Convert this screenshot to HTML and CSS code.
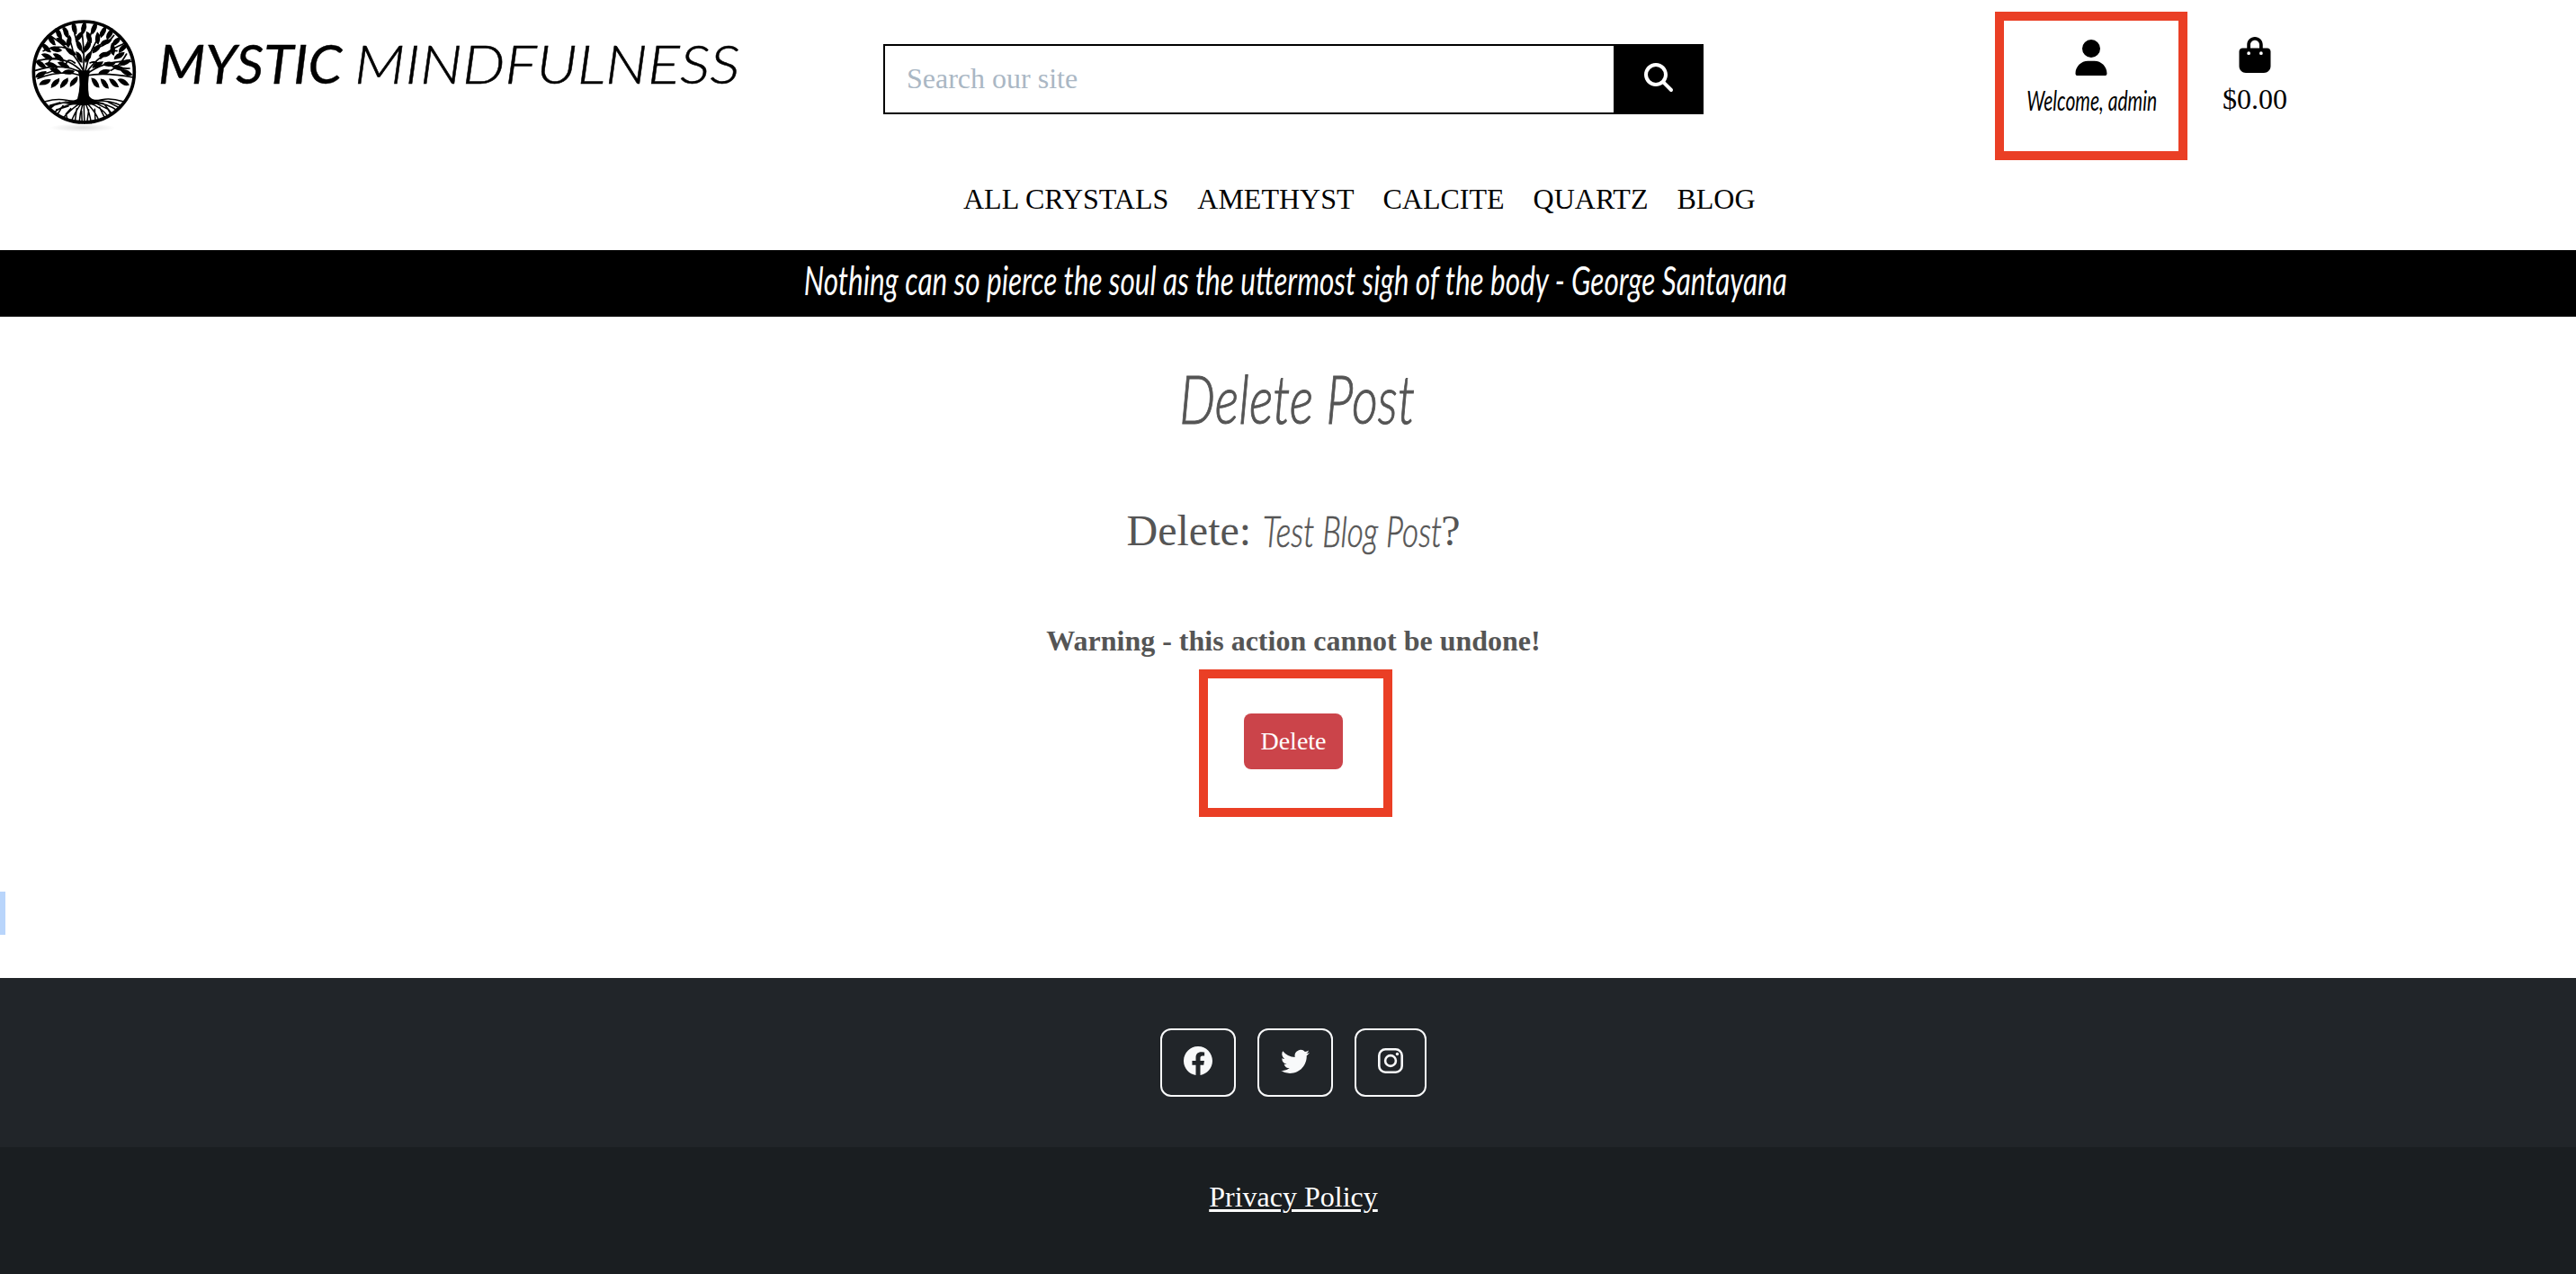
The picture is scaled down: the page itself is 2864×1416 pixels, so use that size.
FILE: index.html
```html
<!DOCTYPE html>
<html lang="en">
<head>
<meta charset="utf-8">
<title>Mystic Mindfulness - Delete Post</title>
<link rel="stylesheet" href="styles.css">
</head>
<body>
<header class="top">
  <a class="brand">
    <svg class="tree" viewBox="0 0 450 420">
      <defs>
        <path id="leaf" d="M-22 0Q-8-18 22 0Q6 17-22 0Z"/>
        <radialGradient id="shade"><stop offset="0" stop-color="#ddd"/><stop offset="1" stop-color="#fff"/></radialGradient>
      </defs>
      <ellipse cx="215" cy="396" rx="110" ry="14" fill="url(#shade)"/>
      <circle cx="220" cy="210" r="168" fill="#fff" stroke="#000" stroke-width="11"/>
      <path d="M200 205Q212 250 198 300Q180 310 150 316L220 322L290 314Q246 305 237 290Q230 250 240 205Z"/>
      <g class="branches">
        <path d="M218 215Q222 150 216 100T222 48M218 205Q190 150 150 120T112 92M214 210Q160 150 66 172M216 215Q150 175 58 205M210 222Q150 200 66 232M224 210Q240 130 285 70M226 215Q270 150 355 115M228 218Q290 170 378 175M228 222Q290 210 384 228M185 155Q180 100 150 66M160 130Q120 120 84 140M219 150Q190 110 186 62M219 140Q240 100 252 55M250 130Q290 130 320 88M275 165Q310 135 330 140M150 175Q110 150 100 185M290 180Q330 200 372 198M130 195Q110 215 84 214M310 205Q340 190 362 150M190 180Q165 160 160 185M240 180Q260 170 276 190"/>
      </g>
      <g class="roots">
        <path d="M92 308Q130 298 160 304T204 304M350 308Q310 296 280 302T236 300M190 310Q140 306 100 330M196 314Q150 320 118 346M204 316Q170 340 148 366M210 316Q186 350 178 376M216 316Q206 350 204 380M220 316Q220 350 222 382M226 316Q240 350 244 380M232 316Q260 346 270 372M240 314Q280 330 300 358M246 310Q300 316 330 338M250 306Q310 304 344 322M160 310L122 320L104 334M150 322L130 354M176 332L160 350L166 372M196 332L190 376M212 340L214 380M236 336L230 380M256 334L258 376M272 328L290 364M290 320L314 350M300 310L340 330M168 324L128 336M140 312L106 322M264 316L300 334L310 352"/>
      </g>
      <g>
        <use href="#leaf" transform="translate(220 62) rotate(-85)"/><use href="#leaf" transform="translate(188 64) rotate(-110)"/><use href="#leaf" transform="translate(254 64) rotate(-75)"/><use href="#leaf" transform="translate(284 76) rotate(-70)"/><use href="#leaf" transform="translate(160 78) rotate(-115)"/><use href="#leaf" transform="translate(136 82) rotate(-120)"/><use href="#leaf" transform="translate(306 84) rotate(-65)"/><use href="#leaf" transform="translate(328 108) rotate(-50)"/><use href="#leaf" transform="translate(112 104) rotate(-130)"/>
        <use href="#leaf" transform="translate(146 108) rotate(-150)"/><use href="#leaf" transform="translate(204 92) rotate(-60)"/><use href="#leaf" transform="translate(237 94) rotate(-115)"/><use href="#leaf" transform="translate(266 98) rotate(-95)"/><use href="#leaf" transform="translate(294 110) rotate(-25)"/><use href="#leaf" transform="translate(170 108) rotate(-85)"/><use href="#leaf" transform="translate(94 130) rotate(-140)"/><use href="#leaf" transform="translate(126 134) rotate(-170)"/><use href="#leaf" transform="translate(350 130) rotate(-50)"/><use href="#leaf" transform="translate(316 134) rotate(-100)"/>
        <use href="#leaf" transform="translate(204 122) rotate(-120)"/><use href="#leaf" transform="translate(232 126) rotate(-65)"/><use href="#leaf" transform="translate(262 132) rotate(-50)"/><use href="#leaf" transform="translate(176 142) rotate(-150)"/><use href="#leaf" transform="translate(98 158) rotate(-160)"/><use href="#leaf" transform="translate(135 160) rotate(-150)"/><use href="#leaf" transform="translate(204 160) rotate(-120)"/><use href="#leaf" transform="translate(234 160) rotate(-65)"/><use href="#leaf" transform="translate(290 152) rotate(-15)"/><use href="#leaf" transform="translate(338 156) rotate(-35)"/>
        <use href="#leaf" transform="translate(76 184) rotate(-150)"/><use href="#leaf" transform="translate(110 186) rotate(-170)"/><use href="#leaf" transform="translate(152 186) rotate(-160)"/><use href="#leaf" transform="translate(266 186) rotate(-30)"/><use href="#leaf" transform="translate(304 184) rotate(-10)"/><use href="#leaf" transform="translate(358 178) rotate(-30)"/><use href="#leaf" transform="translate(334 196) rotate(10)"/><use href="#leaf" transform="translate(76 218) rotate(150)"/><use href="#leaf" transform="translate(126 206) rotate(20)"/><use href="#leaf" transform="translate(168 210) rotate(170)"/>
        <use href="#leaf" transform="translate(288 210) rotate(-20)"/><use href="#leaf" transform="translate(362 212) rotate(20)"/><use href="#leaf" transform="translate(90 244) rotate(155)"/><use href="#leaf" transform="translate(124 247) rotate(130)"/><use href="#leaf" transform="translate(154 247) rotate(125)"/><use href="#leaf" transform="translate(186 242) rotate(125)"/><use href="#leaf" transform="translate(258 246) rotate(50)"/><use href="#leaf" transform="translate(289 249) rotate(50)"/><use href="#leaf" transform="translate(320 247) rotate(40)"/><use href="#leaf" transform="translate(352 244) rotate(25)"/>
      </g>
    </svg>
    <span class="script brand-bold">MYSTIC</span>
    <span class="script brand-thin">MINDFULNESS</span>
  </a>
  <form class="search">
    <input class="search-input" type="text" placeholder="Search our site">
    <button class="search-button" type="button"><svg width="32" height="32" viewBox="0 0 512 512" fill="#fff"><path d="M416 208c0 45.9-14.9 88.3-40 122.700L502.600 457.400c12.500 12.500 12.500 32.800 0 45.300s-32.800 12.500-45.300 0L330.700 376c-34.400 25.200-76.800 40-122.700 40C93.100 416 0 322.900 0 208S93.100 0 208 0S416 93.100 416 208zM208 352a144 144 0 1 0 0-288 144 144 0 1 0 0 288z"/></svg></button>
  </form>
  <div class="account">
    <svg width="36" height="40" viewBox="0 0 448 512"><path d="M224 256A128 128 0 1 0 224 0a128 128 0 1 0 0 256zm-45.700 48C79.800 304 0 383.800 0 482.300C0 498.700 13.300 512 29.700 512H418.300c16.400 0 29.700-13.300 29.700-29.700C448 383.800 368.200 304 269.700 304H178.300z"/></svg>
    <span class="script welcome">Welcome, admin</span>
    <div class="mark mark-account"></div>
  </div>
  <div class="bag">
    <svg width="36" height="40" viewBox="0 0 448 512"><path d="M160 112c0-35.300 28.700-64 64-64s64 28.700 64 64v48H160V112zm-48 48H48c-26.500 0-48 21.500-48 48V416c0 53 43 96 96 96H352c53 0 96-43 96-96V208c0-26.500-21.500-48-48-48H336V112C336 50.100 285.900 0 224 0S112 50.100 112 112v48zm24 48a24 24 0 1 1 0 48 24 24 0 1 1 0-48zm152 24a24 24 0 1 1 48 0 24 24 0 1 1 -48 0z"/></svg>
    <span>$0.00</span>
  </div>
</header>
<nav class="menu"><a>ALL CRYSTALS</a><a>AMETHYST</a><a>CALCITE</a><a>QUARTZ</a><a>BLOG</a></nav>
<div class="quote"><span class="script quote-text">Nothing can so pierce the soul as the uttermost sigh of the body - George Santayana</span></div>
<main class="content">
  <h1 class="title"><span class="script title-text">Delete Post</span></h1>
  <h2 class="question"><span>Delete:</span><span class="post-slot"><span class="script post-name">Test Blog Post</span></span><span>?</span></h2>
  <p class="warning">Warning - this action cannot be undone!</p>
  <div class="action">
    <button class="delete" type="button">Delete</button>
    <div class="mark mark-delete"></div>
  </div>
  <div class="selection"></div>
</main>
<footer class="footer">
  <div class="social">
    <a class="social-link"><svg width="32" height="32" viewBox="0 0 16 16"><path d="M16 8.049c0-4.446-3.582-8.050-8-8.050C3.580 0-.002 3.603-.002 8.050c0 4.017 2.926 7.347 6.750 7.951v-5.625h-2.030V8.050H6.750V6.275c0-2.017 1.195-3.131 3.022-3.131.876 0 1.791.157 1.791.157v1.980h-1.009c-.993 0-1.303.621-1.303 1.258v1.510h2.218l-.354 2.326H9.250V16c3.824-.604 6.750-3.934 6.750-7.951z"/></svg></a>
    <a class="social-link"><svg width="32" height="32" viewBox="0 0 16 16"><path d="M5.026 15c6.038 0 9.341-5.003 9.341-9.334 0-.140 0-.282-.006-.422A6.685 6.685 0 0 0 16 3.542a6.658 6.658 0 0 1-1.889.518 3.301 3.301 0 0 0 1.447-1.817 6.533 6.533 0 0 1-2.087.793A3.286 3.286 0 0 0 7.875 6.030a9.325 9.325 0 0 1-6.767-3.429 3.289 3.289 0 0 0 1.018 4.382A3.323 3.323 0 0 1 .640 6.575v.045a3.288 3.288 0 0 0 2.632 3.218 3.203 3.203 0 0 1-.865.115 3.230 3.230 0 0 1-.614-.057 3.283 3.283 0 0 0 3.067 2.277A6.588 6.588 0 0 1 .780 13.580a6.320 6.320 0 0 1-.780-.045A9.344 9.344 0 0 0 5.026 15z"/></svg></a>
    <a class="social-link social-narrow"><svg width="28" height="28" viewBox="0 0 28 28"><rect x="1.300" y="1.300" width="25.400" height="25.400" rx="7" fill="none" stroke="#f8f9fa" stroke-width="2.600"/><circle cx="14" cy="14" r="5.900" fill="none" stroke="#f8f9fa" stroke-width="2.600"/><circle cx="21.500" cy="6.500" r="1.700"/></svg></a>
  </div>
  <div class="legal"><a class="privacy">Privacy Policy</a></div>
</footer>
</body>
</html>
```
FILE: styles.css
```css
* { box-sizing: border-box; }
body {
  margin: 0;
  height: 1416px;
  display: flex;
  flex-direction: column;
  overflow: hidden;
  background: #fff;
  color: #000;
  font: 32px/48px "Liberation Serif", "Times New Roman", serif;
}
svg { display: block; flex: none; }
.script {
  font-family: Lato, "Liberation Sans", sans-serif;
  font-style: italic;
  font-weight: 400;
  white-space: nowrap;
  display: inline-block;
}
.top {
  height: 192px;
  display: grid;
  grid-template-columns: 982px 912px 324px 216px 146px;
  align-items: start;
}
.brand { display: flex; padding: 10px 0 0 20px; }
.tree { width: 150px; height: 140px; }
.branches, .roots { fill: none; stroke: #000; stroke-width: 5; stroke-linecap: round; }
.roots { stroke-width: 4.500; }
.brand-bold, .brand-thin {
  font-size: 60px;
  line-height: 72px;
  margin-top: 24px;
  transform-origin: 0 50%;
}
.brand-bold { width: 202px; margin-left: 6px; font-weight: 400; -webkit-text-stroke: .4px #000; transform: scaleX(1.01); }
.brand-thin { width: 430px; margin-left: 16px; font-weight: 300; -webkit-text-stroke: .5px #000; transform: scaleX(1.115); }
.search { display: flex; height: 78px; margin-top: 49px; }
.search-input {
  width: 812px;
  padding: 0 25px 2px 24px;
  border: 2px solid #000;
  border-right: 0;
  border-radius: 0;
  font: inherit;
  color: #000;
}
.search-input::placeholder { color: #aab7c4; opacity: 1; }
.search-button {
  width: 100px;
  padding: 0 0 0 34px;
  border: 0;
  background: #000;
}
.search-button svg { margin-top: -4px; }
.account, .bag { display: flex; flex-direction: column; align-items: center; }
.account { grid-column: 4; position: relative; padding-top: 44px; }
.account > svg { margin-right: 2px; }
.welcome {
  margin-top: 5px;
  font-size: 31px;
  line-height: 44px;
  transform: scaleX(.68);
}
.bag { grid-column: 5; padding-top: 41px; }
.bag span { margin-top: 5px; }
.mark { position: absolute; border: 10px solid #ea3f25; }
.mark-account { left: 0; top: 13px; width: 214px; height: 165px; }
.menu {
  height: 86px;
  display: flex;
  gap: 32px;
  padding: 5px 0 0 1071px;
}
.quote {
  height: 74px;
  display: flex;
  justify-content: center;
  padding-left: 16px;
  background: #000;
  color: #fff;
}
.quote-text { font-size: 44px; line-height: 66px; transform: scaleX(.717); }
.content {
  position: relative;
  height: 735px;
  display: flex;
  flex-direction: column;
  align-items: center;
  padding-left: 12px;
  color: #555;
}
h1, h2, p { margin: 0; font-weight: 400; }
.title { height: 90px; margin-top: 46px; padding-left: 8px; }
.title-text { font-size: 74px; line-height: 90px; font-weight: 300; -webkit-text-stroke: 1px #555; transform: scaleX(.76); }
.question {
  height: 72px;
  display: flex;
  margin-top: 66px;
  font-size: 48px;
  line-height: 72px;
}
.post-slot { width: 198px; margin-left: 13px; }
.post-name { font-size: 47px; font-weight: 300; -webkit-text-stroke: .6px #555; transform: scaleX(.75); transform-origin: 0 50%; }
.warning { margin-top: 62px; font-weight: 700; }
.action { position: relative; margin-top: 57px; }
.delete {
  display: block;
  width: 110px;
  height: 62px;
  padding: 0;
  border: 0;
  border-radius: 8px;
  background: #cb444a;
  color: #fff;
  font: 28px/42px "Liberation Serif", "Times New Roman", serif;
}
.mark-delete { left: -50px; top: -49px; width: 215px; height: 164px; }
.selection { position: absolute; left: 0; top: 639px; width: 6px; height: 48px; background: #b9d5fb; }
.footer { height: 329px; background: #212529; color: #fff; }
.social {
  height: 188px;
  display: flex;
  justify-content: center;
  gap: 24px;
  padding: 56px 0 0 12px;
}
.social-link {
  width: 84px;
  height: 76px;
  display: flex;
  justify-content: center;
  padding-top: 18px;
  border: 2px solid #f8f9fa;
  border-radius: 12px;
  fill: #f8f9fa;
}
.social-narrow { width: 80px; padding-top: 20px; }
.legal {
  height: 141px;
  display: flex;
  justify-content: center;
  padding: 31px 0 0 12px;
  background: #1a1e21;
}
.privacy { text-decoration: underline; text-decoration-thickness: 3px; text-underline-offset: 3px; }
```
